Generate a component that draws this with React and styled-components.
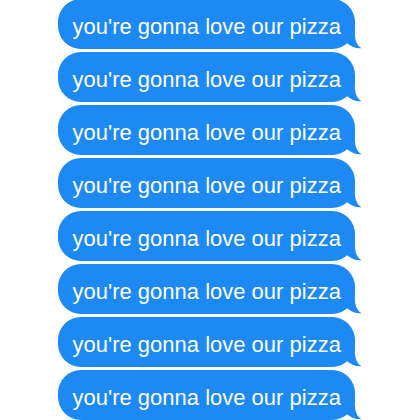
import React from "react";
import styled, { createGlobalStyle } from "styled-components";

const Global = createGlobalStyle`
  html, body {
    margin: 0;
    padding: 0;
    background: #ffffff;
    overflow: hidden;
  }
`;

const Thread = styled.div`
  display: flex;
  flex-direction: column;
  align-items: flex-start;
  gap: 3px;
  margin-top: -1px;
  padding-left: 57.5px;
`;

const Bubble = styled.div`
  position: relative;
  box-sizing: border-box;
  width: 297px;
  height: 50px;
  padding: 5px 12px 0 15px;
  display: flex;
  align-items: center;
  background: #1d89f5;
  border-radius: 23px;
`;

const Label = styled.span`
  position: relative;
  z-index: 1;
  color: #ffffff;
  font-family: "Liberation Sans", Arial, sans-serif;
  font-size: 22px;
  white-space: nowrap;
`;

// tail sits on the bottom-right corner, local (20, 24) is the bubble's corner
const Tail = styled.svg`
  position: absolute;
  right: -8px;
  bottom: 0;
  width: 28px;
  height: 24px;
  overflow: visible;
`;

const BubbleTail = () =>
    <Tail viewBox="0 0 28 24">
        <path
            d="M4 2 L20 2 L20 4 C19.4 13 20.6 19.5 26.5 23.2 C21 23.8 16.5 21.5 12 18.2 L4 12 Z"
            fill="#1d89f5"
        />
    </Tail>

const messages = Array.from({length: 8}, () => "you're gonna love our pizza");

export default () =>
    <>
        <Global/>
        <Thread>
            {messages.map((text, i) =>
                <Bubble key={i}>
                    <Label>{text}</Label>
                    <BubbleTail/>
                </Bubble>
            )}
        </Thread>
    </>
